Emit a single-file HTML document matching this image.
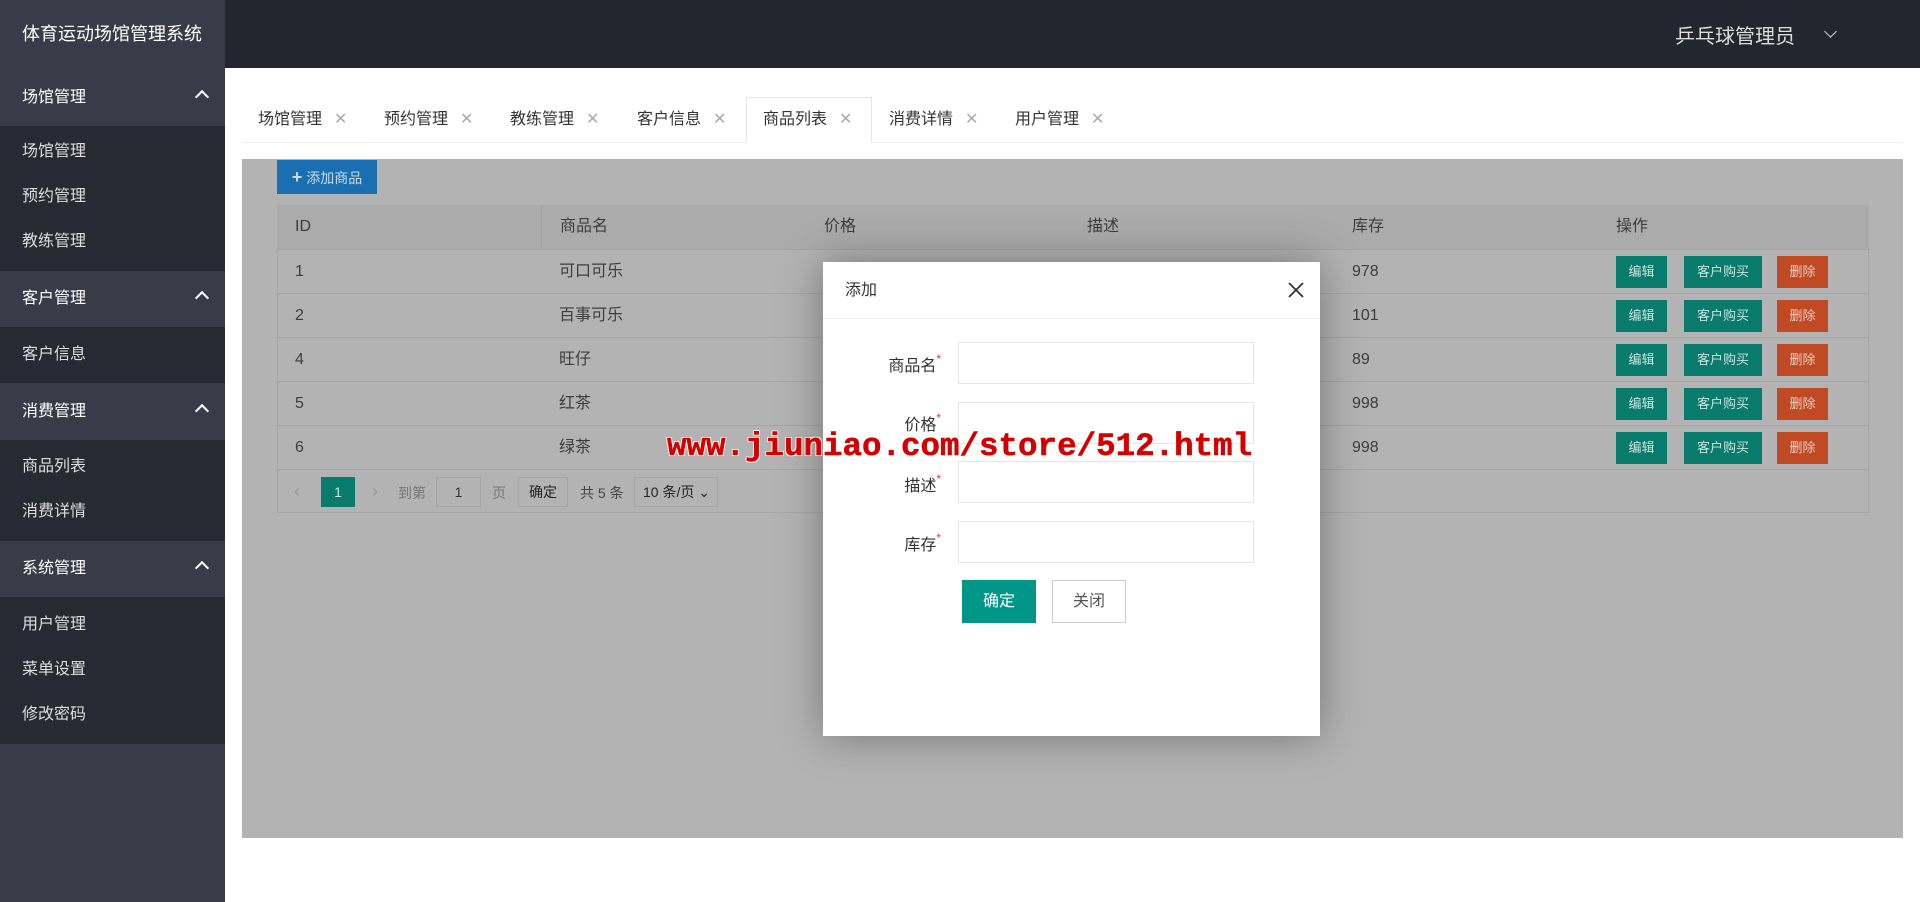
<!DOCTYPE html>
<html><head><meta charset="utf-8">
<style>
*{margin:0;padding:0;box-sizing:border-box}
body{width:1920px;height:902px;position:relative;overflow:hidden;background:#fff;font-family:"Liberation Sans","Noto Sans CJK SC",sans-serif;font-size:16px;color:#333}
.a{position:absolute}
#side{left:0;top:0;width:225px;height:902px;background:#393c48}
.title{left:0;top:0;width:225px;height:68px;background:#393c48;color:#fff;font-size:18px;line-height:68px;padding-left:22px}
.grp{left:0;width:225px;height:56px;background:#393c48;color:#fff;line-height:56px;padding-left:22px;font-size:16px}
.grp i{position:absolute;right:18px;top:22px;width:10px;height:10px;border-left:2px solid #fff;border-top:2px solid #fff;transform:rotate(45deg)}
.dk{left:0;width:225px;background:#282a33}
.it{left:22px;color:#ddd;font-size:16px;line-height:20px}
#hdr{left:225px;top:0;width:1695px;height:68px;background:#23262e}
.tab{top:97px;height:45px;line-height:45px;font-size:16px;color:#333}
.tab span{color:#aaa;margin-left:12px;font-size:16px}
#gray{left:242px;top:159px;width:1661px;height:679px;background:#b3b3b3}
.row{left:277px;width:1592px;height:44px;border-bottom:1px solid #a6a6a6;line-height:44px;color:#3d3d3d;font-size:16px}
.c{position:absolute;top:0;padding-left:18px}
.b{position:absolute;top:6px;height:32px;line-height:32px;color:#cfe;font-size:13px;text-align:center}
.t{background:#087b6d;color:#c9e3df}
.r{background:#c04a24;color:#eccfc5}
#modal{left:823px;top:262px;width:497px;height:474px;background:#fff;box-shadow:0 0 40px rgba(0,0,0,.35)}
.lab{width:118px;text-align:right;font-size:16px;color:#333}
.lab em{color:#e33;font-style:normal;font-size:12px;vertical-align:top}
.inp{left:135px;width:296px;height:42px;border:1px solid #e6e6e6}
</style></head><body>
<div id="side" class="a"></div>
<div class="a title">体育运动场馆管理系统</div>
<div class="a grp" style="top:70px">场馆管理<i></i></div>
<div class="a dk" style="top:126px;height:145px"></div>
<div class="a it" style="top:142px">场馆管理</div>
<div class="a it" style="top:187px">预约管理</div>
<div class="a it" style="top:232px">教练管理</div>
<div class="a grp" style="top:271px">客户管理<i></i></div>
<div class="a dk" style="top:327px;height:56px"></div>
<div class="a it" style="top:345px">客户信息</div>
<div class="a grp" style="top:384px">消费管理<i></i></div>
<div class="a dk" style="top:440px;height:101px"></div>
<div class="a it" style="top:457px">商品列表</div>
<div class="a it" style="top:502px">消费详情</div>
<div class="a grp" style="top:541px">系统管理<i></i></div>
<div class="a dk" style="top:597px;height:147px"></div>
<div class="a it" style="top:615px">用户管理</div>
<div class="a it" style="top:660px">菜单设置</div>
<div class="a it" style="top:705px">修改密码</div>

<div id="hdr" class="a"></div>
<div class="a" style="left:1675px;top:20px;color:#ddd;font-size:20px">乒乓球管理员</div>
<div class="a" style="left:1826px;top:27px;width:9px;height:9px;border-right:1.5px solid #ccc;border-bottom:1.5px solid #ccc;transform:rotate(45deg)"></div>

<div class="a" style="left:242px;top:142px;width:1661px;height:1px;background:#eee"></div>
<div class="a" style="left:746px;top:97px;width:126px;height:46px;border:1px solid #e6e6e6;border-bottom:1px solid #fff;background:#fff"></div>
<div class="a tab" style="left:258px">场馆管理<span>✕</span></div>
<div class="a tab" style="left:384px">预约管理<span>✕</span></div>
<div class="a tab" style="left:510px">教练管理<span>✕</span></div>
<div class="a tab" style="left:637px">客户信息<span>✕</span></div>
<div class="a tab" style="left:763px">商品列表<span>✕</span></div>
<div class="a tab" style="left:889px">消费详情<span>✕</span></div>
<div class="a tab" style="left:1015px">用户管理<span>✕</span></div>

<div id="gray" class="a"></div>
<div class="a" style="left:277px;top:160px;width:100px;height:34px;background:#1a6fb2;color:#c6dcef;font-size:14px;line-height:34px;text-align:center"><b style="font-size:18px">+</b> 添加商品</div>
<div class="a" style="left:277px;top:205px;width:1592px;height:308px;border:1px solid #a8a8a8"></div>
<div class="a row" style="top:205px;height:45px;background:#ababab">
<div class="c" style="left:0">ID</div><div class="c" style="left:264px;border-left:1px solid #a3a3a3;height:44px">商品名</div><div class="c" style="left:529px">价格</div><div class="c" style="left:792px">描述</div><div class="c" style="left:1057px">库存</div><div class="c" style="left:1321px">操作</div></div>
<div class="a row" style="top:250px"><div class="c" style="left:0">1</div><div class="c" style="left:264px">可口可乐</div><div class="c" style="left:1057px">978</div><div class="b t" style="left:1339px;width:51px">编辑</div><div class="b t" style="left:1407px;width:78px">客户购买</div><div class="b r" style="left:1500px;width:51px">删除</div></div>
<div class="a row" style="top:294px"><div class="c" style="left:0">2</div><div class="c" style="left:264px">百事可乐</div><div class="c" style="left:1057px">101</div><div class="b t" style="left:1339px;width:51px">编辑</div><div class="b t" style="left:1407px;width:78px">客户购买</div><div class="b r" style="left:1500px;width:51px">删除</div></div>
<div class="a row" style="top:338px"><div class="c" style="left:0">4</div><div class="c" style="left:264px">旺仔</div><div class="c" style="left:1057px">89</div><div class="b t" style="left:1339px;width:51px">编辑</div><div class="b t" style="left:1407px;width:78px">客户购买</div><div class="b r" style="left:1500px;width:51px">删除</div></div>
<div class="a row" style="top:382px"><div class="c" style="left:0">5</div><div class="c" style="left:264px">红茶</div><div class="c" style="left:1057px">998</div><div class="b t" style="left:1339px;width:51px">编辑</div><div class="b t" style="left:1407px;width:78px">客户购买</div><div class="b r" style="left:1500px;width:51px">删除</div></div>
<div class="a row" style="top:426px"><div class="c" style="left:0">6</div><div class="c" style="left:264px">绿茶</div><div class="c" style="left:1057px">998</div><div class="b t" style="left:1339px;width:51px">编辑</div><div class="b t" style="left:1407px;width:78px">客户购买</div><div class="b r" style="left:1500px;width:51px">删除</div></div>

<div class="a" style="left:294px;top:481px;color:#999;font-size:18px">‹</div>
<div class="a" style="left:321px;top:477px;width:34px;height:30px;background:#087b6d;color:#cfe4e0;text-align:center;line-height:30px;font-size:14px">1</div>
<div class="a" style="left:372px;top:481px;color:#999;font-size:18px">›</div>
<div class="a" style="left:398px;top:483px;color:#777;font-size:14px">到第</div>
<div class="a" style="left:436px;top:477px;width:45px;height:30px;border:1px solid #a6a6a6;text-align:center;line-height:28px;font-size:14px;color:#333">1</div>
<div class="a" style="left:492px;top:483px;color:#777;font-size:14px">页</div>
<div class="a" style="left:518px;top:477px;width:50px;height:30px;border:1px solid #a6a6a6;text-align:center;line-height:28px;font-size:14px;color:#222">确定</div>
<div class="a" style="left:580px;top:483px;color:#444;font-size:14px">共 5 条</div>
<div class="a" style="left:634px;top:477px;width:84px;height:30px;border:1px solid #a6a6a6;line-height:28px;padding-left:8px;font-size:14px;color:#222">10 条/页 ⌄</div>

<div id="modal" class="a">
<div class="a" style="left:0;top:0;width:497px;height:57px;border-bottom:1px solid #eee;line-height:57px;padding-left:22px;font-size:16px;color:#333">添加</div>
<svg class="a" style="left:465px;top:20px" width="16" height="16" viewBox="0 0 16 16"><path d="M1 1L15 15M15 1L1 15" stroke="#333" stroke-width="1.8"/></svg>
<div class="a lab" style="left:0;top:90px">商品名<em>*</em></div>
<div class="a inp" style="top:80px"></div>
<div class="a lab" style="left:0;top:149px">价格<em>*</em></div>
<div class="a inp" style="top:140px"></div>
<div class="a lab" style="left:0;top:210px">描述<em>*</em></div>
<div class="a inp" style="top:199px"></div>
<div class="a lab" style="left:0;top:269px">库存<em>*</em></div>
<div class="a inp" style="top:259px"></div>
<div class="a" style="left:139px;top:318px;width:74px;height:43px;background:#009688;color:#fff;text-align:center;line-height:43px;font-size:16px">确定</div>
<div class="a" style="left:229px;top:318px;width:74px;height:43px;border:1px solid #ccc;color:#555;text-align:center;line-height:41px;font-size:16px">关闭</div>
</div>
<div class="a" style="left:667px;top:428px;font-family:'Liberation Mono',monospace;font-weight:bold;font-size:32.5px;color:#d40000;-webkit-text-stroke:0.5px #d40000;text-shadow:1px 1px 0 #fff,-1px -1px 0 #fff,1px -1px 0 #fff,-1px 1px 0 #fff;white-space:nowrap">www.jiuniao.com/store/512.html</div>
</body></html>
